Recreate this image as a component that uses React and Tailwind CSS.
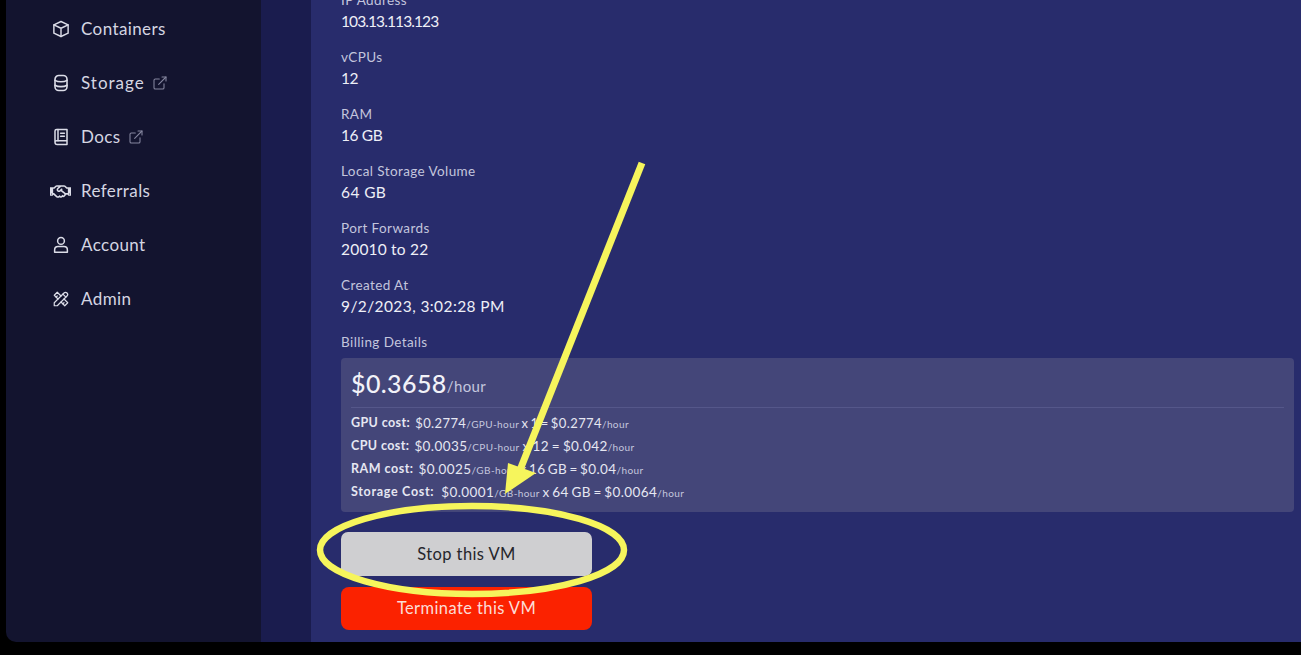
import React from "react";
import { ExternalLink } from "lucide-react";
import { FaRegHandshake } from "react-icons/fa";
import { TbTools } from "react-icons/tb";

function CubeIcon() {
  return (
    <svg width="18" height="18" viewBox="0 0 24 24" fill="none" stroke="currentColor" strokeWidth="1.9" strokeLinejoin="round" strokeLinecap="round">
      <path d="M12 2 L21.5 6.5 V17.5 L12 22 L2.5 17.5 V6.5 Z" />
      <path d="M2.5 6.5 L12 11 L21.5 6.5 M12 11 V22" />
    </svg>
  );
}

function DbIcon() {
  return (
    <svg width="18" height="18" viewBox="0 0 24 24" fill="none" stroke="currentColor" strokeWidth="2.1" strokeLinecap="round">
      <rect x="4" y="2" width="16" height="20" rx="5" />
      <path d="M4 8.5 C8 11 16 11 20 8.5 M4 15 C8 17.5 16 17.5 20 15" />
    </svg>
  );
}

function BookIcon() {
  return (
    <svg width="18" height="18" viewBox="0 0 24 24" fill="none" stroke="currentColor" strokeWidth="2" strokeLinejoin="round" strokeLinecap="round">
      <path d="M4 19 V4 Q4 2 6 2 H20 V17 H6 Q4 17 4 19 Q4 22 7 22 H20 V17" />
      <path d="M8 2 V17 M11.5 7 H16.5 M11.5 11 H16.5" />
    </svg>
  );
}

function PersonIcon() {
  return (
    <svg width="18" height="18" viewBox="0 0 24 24" fill="none" stroke="currentColor" strokeWidth="2" strokeLinejoin="round">
      <circle cx="12" cy="6.5" r="4.5" />
      <path d="M3.5 21.5 V18.5 Q3.5 14 8 14 H16 Q20.5 14 20.5 18.5 V21.5 Z" />
    </svg>
  );
}

const nav = [
  { label: "Containers", Icon: CubeIcon },
  { label: "Storage", Icon: DbIcon, ext: true, track: "tracking-[1px]" },
  { label: "Docs", Icon: BookIcon, ext: true },
  { label: "Referrals", icon: <FaRegHandshake size={21} className="-ml-[2px]" /> },
  { label: "Account", Icon: PersonIcon },
  { label: "Admin", icon: <TbTools size={18} strokeWidth={1.6} /> },
];

const fields = [
  ["IP Address", "103.13.113.123", "tracking-[-0.9px]"],
  ["vCPUs", "12", "tracking-[-0.5px]"],
  ["RAM", "16 GB", "tracking-[-0.4px]"],
  ["Local Storage Volume", "64 GB", ""],
  ["Port Forwards", "20010 to 22", "tracking-[0.2px]"],
  ["Created At", "9/2/2023, 3:02:28 PM", ""],
];

function Unit({ children }) {
  return <span className="text-[10px] text-[#c4c6de]">{children}</span>;
}

function Cost({ name, nameClass = "", size = "text-[13.5px]", children }) {
  return (
    <div className={`flex h-[23px] items-center whitespace-pre text-[#e6e7f2] ${size}`}>
      <span className={`text-[12.5px] font-bold ${nameClass}`}>{name}</span>
      <span>{children}</span>
    </div>
  );
}

export default function App() {
  return (
    <div className="relative h-[655px] w-[1301px] overflow-hidden bg-black font-['Lato',sans-serif] tracking-[0.4px]">
      <div className="ml-[6px] flex h-[642px] overflow-hidden rounded-bl-[10px]">
        <aside className="w-[255px] shrink-0 bg-[#13142f] pt-[2px] pl-[46px]">
          {nav.map(({ label, Icon, icon, ext, track }) => (
            <div key={label} className="flex h-[54px] items-center text-[17px] text-[#d5d6e2]">
              <span className="flex w-[29px] shrink-0 items-center text-[#dcdde8]">
                {Icon ? <Icon /> : icon}
              </span>
              <span className={track}>{label}</span>
              {ext && <ExternalLink size={16} strokeWidth={1.6} className="ml-[7px] text-[#85869f]" />}
            </div>
          ))}
        </aside>
        <div className="w-[50px] shrink-0 bg-[#1a1c4e]" />
        <main className="min-w-0 flex-1 bg-[#282c6c] pr-[7px] pl-[30px]">
          <div className="-mt-[10px] flex flex-col">
            {fields.map(([k, v, t]) => (
              <div key={k} className="flex h-[57px] flex-col">
                <div className="h-[20px] text-[13.5px] leading-[20px] text-[#c3c5dd]">{k}</div>
                <div className={`h-[22px] text-[15.5px] leading-[22px] text-[#eeeff7] ${t}`}>{v}</div>
              </div>
            ))}
            <div className="h-[20px] text-[13.5px] leading-[20px] text-[#c3c5dd]">Billing Details</div>
            <section className="mt-[6px] h-[154px] rounded-[4px] bg-[#444679] px-[10px]">
              <div className="flex h-[50px] items-center border-b border-[#55578a] pt-[2px]">
                <span className="text-[25px] font-medium text-[#f2f2f8]">$0.3658</span>
                <span className="mt-[5px] text-[15px] text-[#c4c6de]">/hour</span>
              </div>
              <div className="pt-[4px]">
                <Cost name="GPU cost:" nameClass="mr-[5px]" size="text-[13px]">$0.2774<Unit>/GPU-hour</Unit><span className="[word-spacing:-1.5px]"> x 1 = </span>$0.2774<Unit>/hour</Unit></Cost>
                <Cost name="CPU cost:" nameClass="mr-[5px]">$0.0035<Unit>/CPU-hour</Unit><span className="[word-spacing:-1px]"> x 12 = </span>$0.042<Unit>/hour</Unit></Cost>
                <Cost name="RAM cost:" nameClass="mr-[5px] tracking-[0.5px]">$0.0025<Unit>/GB-hour</Unit><span className="[word-spacing:-1.5px]"> x 16 GB = </span>$0.04<Unit>/hour</Unit></Cost>
                <Cost name="Storage Cost:" nameClass="mr-[7px] tracking-[0.7px]">$0.0001<Unit>/GB-hour</Unit><span className="[word-spacing:-1.2px]"> x 64 GB = </span>$0.0064<Unit>/hour</Unit></Cost>
              </div>
            </section>
            <button className="mt-[20px] h-[44px] w-[251px] rounded-[7px] bg-[#cfcfd1] text-[16.5px] text-[#26262c]">Stop this VM</button>
            <button className="mt-[11px] h-[43px] w-[251px] rounded-[8px] bg-[#fb2200] text-[16.5px] text-[#fbdcd6]">Terminate this VM</button>
          </div>
        </main>
      </div>
      <svg className="pointer-events-none absolute top-0 left-0" width="1301" height="655" viewBox="0 0 1301 655">
        <line x1="642" y1="163" x2="520" y2="470" stroke="#f6f55c" strokeWidth="7" />
        <polygon points="508,463 536,473 505,494" fill="#f6f55c" />
        <ellipse cx="472" cy="550" rx="152" ry="44" fill="none" stroke="#f6f55c" strokeWidth="6.5" />
      </svg>
    </div>
  );
}
